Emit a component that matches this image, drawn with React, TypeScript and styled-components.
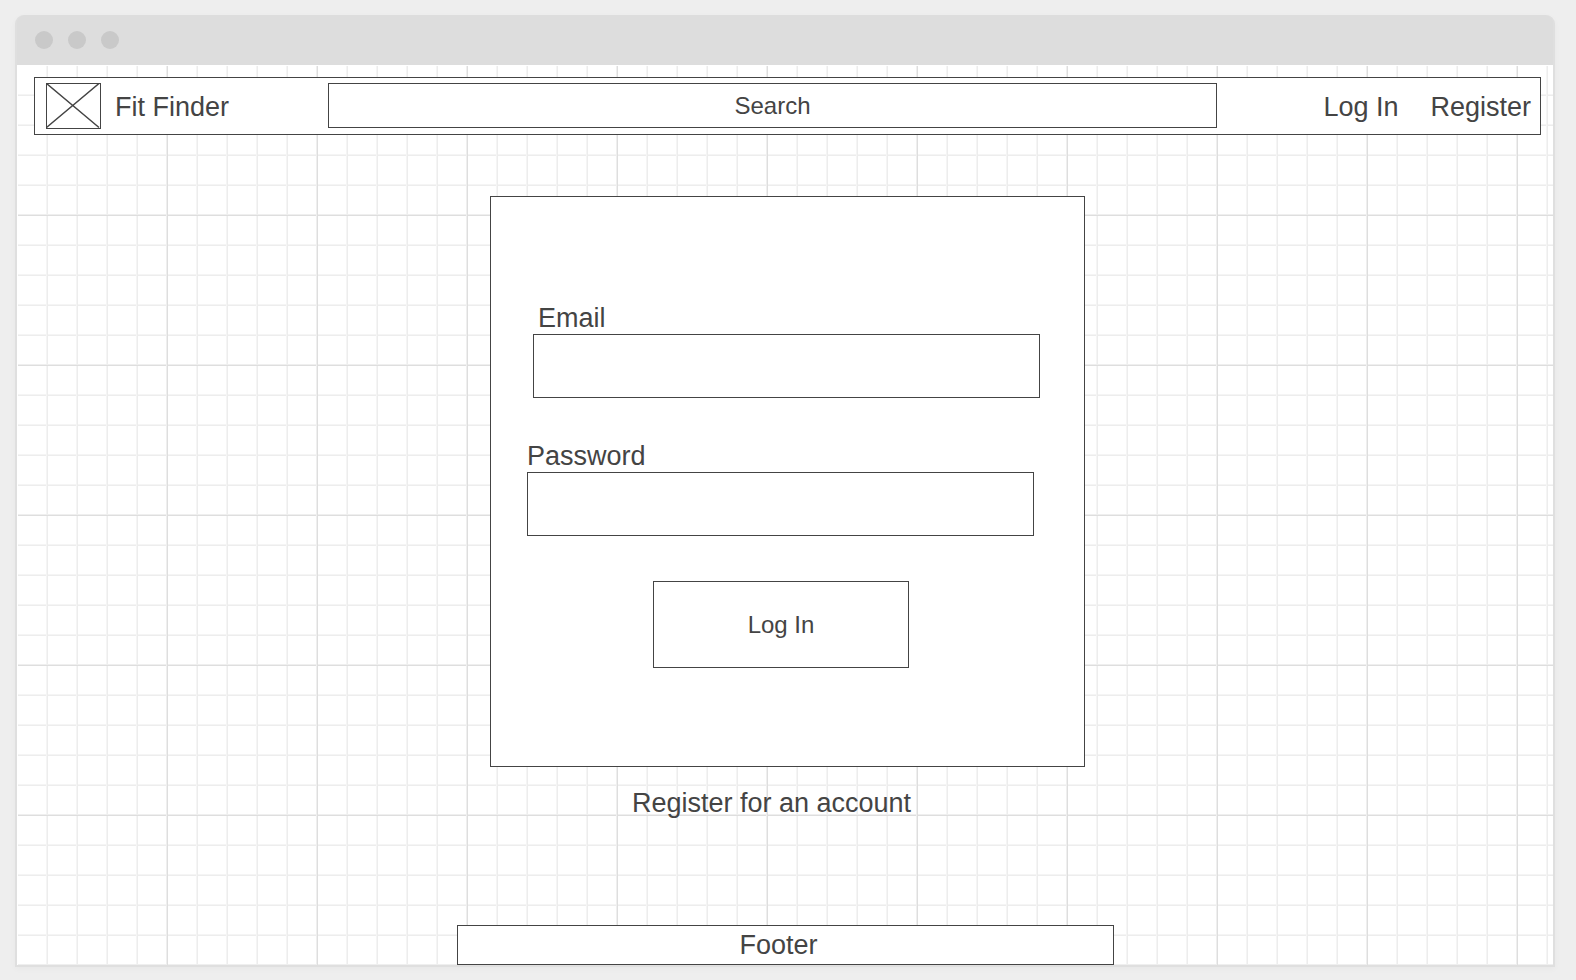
import React from "react";
import styled, { createGlobalStyle, css } from "styled-components";

const ink = "#444";

const GlobalStyle = createGlobalStyle`
  *, *::before, *::after { box-sizing: border-box; }
  body {
    margin: 0;
    background: #eee;
    color: ${ink};
    font: 27px/32px "Liberation Sans", Arial, sans-serif;
  }
`;

const outlined = css`
  border: 1px solid ${ink};
  border-radius: 0;
  background: #fff;
`;

const Page = styled.div`
  display: flex;
  min-height: 100vh;
  padding: 15px 21px 13px 15px;
`;

const BrowserWindow = styled.div`
  flex: 1;
  min-width: 0;
  display: flex;
  flex-direction: column;
  border: 2px solid #dfdfdf;
  border-top: 0;
  border-radius: 9px 9px 0 0;
  background: #ddd;
  box-shadow: 0 2px 6px rgba(0, 0, 0, 0.03);
`;

const TitleBar = styled.div`
  display: flex;
  align-items: center;
  gap: 15px;
  height: 50px;
  padding: 0 18px;
`;

const WindowDot = styled.span`
  width: 18px;
  height: 18px;
  border-radius: 50%;
  background: #c9c9c9;
`;

const Canvas = styled.div`
  flex: 1;
  display: flex;
  flex-direction: column;
  border: 1px solid #fff;
  border-width: 1px 0 0 1px;
  background-color: #fff;
  background-image:
    linear-gradient(90deg, transparent 148px, #efefef 148px, #efefef 149px, #dedede 149px),
    linear-gradient(transparent 148px, #efefef 148px, #efefef 149px, #dedede 149px),
    linear-gradient(90deg, transparent 28px, #f5f5f5 28px, #f5f5f5 29px, #ededed 29px),
    linear-gradient(transparent 28px, #f5f5f5 28px, #f5f5f5 29px, #ededed 29px);
  background-size: 150px 150px, 150px 150px, 30px 30px, 30px 30px;
`;

const Content = styled.div`
  display: flex;
  flex-direction: column;
  align-items: center;
  padding: 11px 12px 24px 16px;
`;

const Header = styled.header`
  ${outlined}
  align-self: stretch;
  display: grid;
  grid-template-columns: 293px 1fr 323px;
  align-items: start;
  height: 58px;
  padding-top: 5px;
`;

const Brand = styled.div`
  display: flex;
  gap: 14px;
  padding-left: 11px;
  line-height: 48px;
`;

const Logo = styled.svg`
  width: 55px;
  height: 46px;
`;

const SearchInput = styled.input`
  ${outlined}
  width: 100%;
  min-width: 0;
  height: 45px;
  padding: 0 8px;
  font: inherit;
  font-size: 24px;
  text-align: center;
  color: ${ink};

  &::placeholder {
    color: ${ink};
    opacity: 1;
  }

  &::-webkit-search-cancel-button {
    display: none;
  }
`;

const Nav = styled.nav`
  display: flex;
  justify-content: flex-end;
  gap: 32px;
  padding-right: 9px;
  line-height: 48px;
`;

const TextLink = styled.a`
  color: inherit;
  text-decoration: none;
`;

const LoginForm = styled.form`
  ${outlined}
  display: flex;
  flex-direction: column;
  width: 100%;
  max-width: 595px;
  margin-top: 61px;
  padding: 105px 44px 98px 36px;
`;

const Field = styled.div<{ $inset?: boolean }>`
  display: flex;
  flex-direction: column;
  width: 507px;
  max-width: 100%;
  margin-bottom: 42px;
  margin-left: ${(p) => (p.$inset ? "6px" : "0")};

  label {
    padding-left: ${(p) => (p.$inset ? "5px" : "0")};
  }
`;

const FieldInput = styled.input`
  ${outlined}
  height: 64px;
  padding: 0 12px;
  font: inherit;
  color: inherit;
`;

const SubmitButton = styled.button`
  ${outlined}
  width: 256px;
  height: 87px;
  margin: 3px 0 0 126px;
  padding: 0;
  font: inherit;
  font-size: 24px;
  color: inherit;
`;

const RegisterPrompt = styled.p`
  margin: 20px 0 0;
  padding-right: 32px;
`;

const Footer = styled.footer`
  ${outlined}
  align-self: center;
  width: 100%;
  max-width: 657px;
  margin-top: auto;
  padding: 3px 14px 3px 0;
  text-align: center;
`;

export default function App() {
  return (
    <>
      <GlobalStyle />
      <Page>
        <BrowserWindow>
          <TitleBar>
            <WindowDot />
            <WindowDot />
            <WindowDot />
          </TitleBar>
          <Canvas>
            <Content>
              <Header>
                <Brand>
                  <Logo viewBox="0 0 55 46" fill="none" stroke={ink} aria-hidden="true">
                    <rect x="0.5" y="0.5" width="54" height="45" />
                    <path d="M.5 .5L53 44.500M.5 44.500L53 .5" strokeWidth="1.5" />
                  </Logo>
                  <span>Fit Finder</span>
                </Brand>
                <SearchInput type="search" placeholder="Search" aria-label="Search" />
                <Nav>
                  <TextLink href="#login">Log In</TextLink>
                  <TextLink href="#register">Register</TextLink>
                </Nav>
              </Header>
              <LoginForm id="login" onSubmit={(e) => e.preventDefault()}>
                <Field $inset>
                  <label htmlFor="email">Email</label>
                  <FieldInput id="email" type="email" />
                </Field>
                <Field>
                  <label htmlFor="password">Password</label>
                  <FieldInput id="password" type="password" />
                </Field>
                <SubmitButton type="submit">Log In</SubmitButton>
              </LoginForm>
              <RegisterPrompt>
                <TextLink href="#register">Register for an account</TextLink>
              </RegisterPrompt>
            </Content>
            <Footer>Footer</Footer>
          </Canvas>
        </BrowserWindow>
      </Page>
    </>
  );
}
